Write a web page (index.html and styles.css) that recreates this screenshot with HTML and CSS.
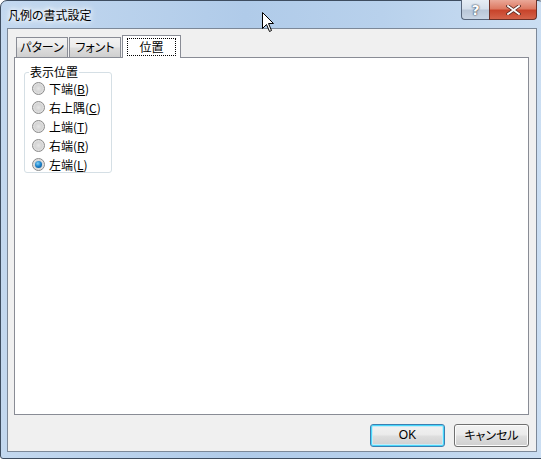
FILE: index.html
```html
<!DOCTYPE html>
<html lang="ja">
<head>
<meta charset="utf-8">
<title>凡例の書式設定</title>
<link rel="stylesheet" href="styles.css">
</head>
<body>
<div class="window">
  <div class="titlebar">
    <span class="title">凡例の書式設定</span>
    <div class="caption-btns">
      <div class="cbtn help">?</div>
      <div class="cbtn close">
        <svg width="15" height="10" viewBox="0 0 15 10"><path d="M2 1 L13 9 M13 1 L2 9" stroke="#5a2a22" stroke-width="3.4" stroke-linecap="square"/><path d="M2 1 L13 9 M13 1 L2 9" stroke="#ffffff" stroke-width="1.8" stroke-linecap="square"/></svg>
      </div>
    </div>
  </div>
  <div class="client">
    <div class="tabs">
      <div class="tab t1">パターン</div>
      <div class="tab t2">フォント</div>
      <div class="tab active"><span class="focus">位置</span></div>
    </div>
    <div class="panel">
      <fieldset class="group">
        <legend>表示位置</legend>
        <div class="radio"><span class="dot"></span><span>下端(<u>B</u>)</span></div>
        <div class="radio"><span class="dot"></span><span>右上隅(<u>C</u>)</span></div>
        <div class="radio"><span class="dot"></span><span>上端(<u>T</u>)</span></div>
        <div class="radio"><span class="dot"></span><span>右端(<u>R</u>)</span></div>
        <div class="radio"><span class="dot checked"></span><span>左端(<u>L</u>)</span></div>
      </fieldset>
    </div>
    <div class="buttons">
      <div class="btn default">OK</div>
      <div class="btn">キャンセル</div>
    </div>
  </div>
  <svg class="cursor" width="13" height="21" viewBox="0 0 13 21"><path d="M0.5 0.5 L0.5 16.5 L4.5 12.5 L7.5 19.5 L9.5 18.5 L6.5 11.5 L11.5 11.5 Z" fill="#ffffff" stroke="#000000" stroke-width="1"/></svg>
</div>
</body>
</html>
```
FILE: styles.css
```css
html, body {
  margin: 0;
  padding: 0;
}
body {
  width: 541px;
  height: 459px;
  overflow: hidden;
  background: #ffffff;
  font-family: "Noto Sans CJK JP", "Noto Sans", sans-serif;
  font-size: 12px;
  font-feature-settings: "palt";
  color: #000;
}
.window {
  position: relative;
  box-sizing: border-box;
  width: 545px;
  height: 459px;
  border: 1px solid #3e4d60;
  border-radius: 7px 7px 0 3px;
  background: linear-gradient(90deg, #c3d8ef 0%, #b0cbe9 45%, #b8d1ec 70%, #cbdef2 100%);
  padding: 0 7px 0 6px;
  display: flex;
  flex-direction: column;
}
.titlebar {
  height: 27px;
  display: flex;
  align-items: flex-start;
  justify-content: space-between;
}
.title {
  margin-top: 6px;
  margin-left: 1px;
  line-height: 16px;
  font-size: 12px;
  color: #000;
  text-shadow: 0 0 4px #ffffff, 0 0 6px #ffffff, 0 0 8px #eaf3fb;
}
.caption-btns {
  display: flex;
  margin-right: 0px;
  margin-top: -1px;
}
.cbtn {
  box-sizing: border-box;
  height: 20px;
  border: 1px solid #56657a;
  border-top: none;
  display: flex;
  align-items: center;
  justify-content: center;
}
.help {
  width: 28px;
  border-radius: 0 0 0 4px;
  border-right: none;
  background: linear-gradient(#e6edf5 0%, #d6e0ec 45%, #b9c7d8 55%, #c9d6e5 100%);
  color: #ffffff;
  font-family: "DejaVu Sans", sans-serif;
  font-weight: bold;
  font-size: 14px;
  text-shadow: 0 0 2px #2d3a4c, 0 0 1px #2d3a4c;
}
.close {
  width: 48px;
  border-radius: 0 0 4px 0;
  border-color: #6d3128;
  background: linear-gradient(#eaa898 0%, #dd7a63 45%, #c8442b 55%, #d4634a 100%);
}
.client {
  box-sizing: border-box;
  width: 530px;
  height: 424px;
  border: 1px solid #7c8898;
  background: #f0f0f0;
  padding: 6px 7px 4px 6px;
  display: flex;
  flex-direction: column;
}
.tabs {
  display: flex;
  align-items: flex-end;
  height: 22px;
  position: relative;
  z-index: 1;
}
.tab {
  box-sizing: border-box;
  height: 20px;
  border: 1px solid #898c95;
  border-bottom: none;
  background: linear-gradient(#f3f3f3 0%, #ebebeb 45%, #dddddd 55%, #cfcfcf 100%);
  text-align: center;
  line-height: 18px;
  margin-left: 1px;
}
.t1 {
  width: 52px;
  margin-left: 2px;
}
.t2 {
  width: 52px;
}
.active {
  width: 59px;
  height: 23px;
  margin-bottom: -1px;
  background: #ffffff;
  padding: 2px 4px 0 4px;
}
.focus {
  display: block;
  height: 16px;
  line-height: 16px;
  border: 1px dotted #000;
}
.panel {
  box-sizing: border-box;
  height: 358px;
  border: 1px solid #898c95;
  background: #ffffff;
  padding: 7px 0 0 9px;
}
.group {
  box-sizing: border-box;
  width: 88px;
  height: 108px;
  margin: 0;
  padding: 0 0 0 7px;
  border: 1px solid #d5dfe5;
  border-radius: 3px;
}
.group legend {
  padding: 0 1px;
  margin-left: -3px;
  line-height: 14px;
}
.radio {
  display: flex;
  align-items: center;
  height: 19px;
  gap: 4px;
}
.dot {
  box-sizing: border-box;
  width: 13px;
  height: 13px;
  border-radius: 50%;
  border: 1px solid #8a8a8a;
  background: radial-gradient(circle at 50% 50%, #e6e6e6 0%, #d4d4d4 45%, #f6f6f6 100%);
  display: flex;
  align-items: center;
  justify-content: center;
}
.checked::after {
  content: "";
  width: 7px;
  height: 7px;
  border-radius: 50%;
  background: radial-gradient(circle at 40% 35%, #7fd0f7 0%, #1a80c8 50%, #0a4d88 100%);
}
.buttons {
  display: flex;
  justify-content: flex-end;
  gap: 9px;
  margin-top: 9px;
}
.btn {
  box-sizing: border-box;
  width: 75px;
  height: 23px;
  border: 1px solid #707070;
  border-radius: 3px;
  background: linear-gradient(#f2f2f2 0%, #ebebeb 45%, #dddddd 55%, #cfcfcf 100%);
  text-align: center;
  line-height: 20px;
  box-shadow: inset 0 0 0 1px #fcfcfc;
}
.btn.default {
  border-color: #3c7fb1;
  box-shadow: inset 0 0 0 1px #48d7fb, inset 0 0 0 2px #c4ebf8;
  font-family: "Liberation Sans", sans-serif;
}
.cursor {
  position: absolute;
  left: 261px;
  top: 11px;
}
```
